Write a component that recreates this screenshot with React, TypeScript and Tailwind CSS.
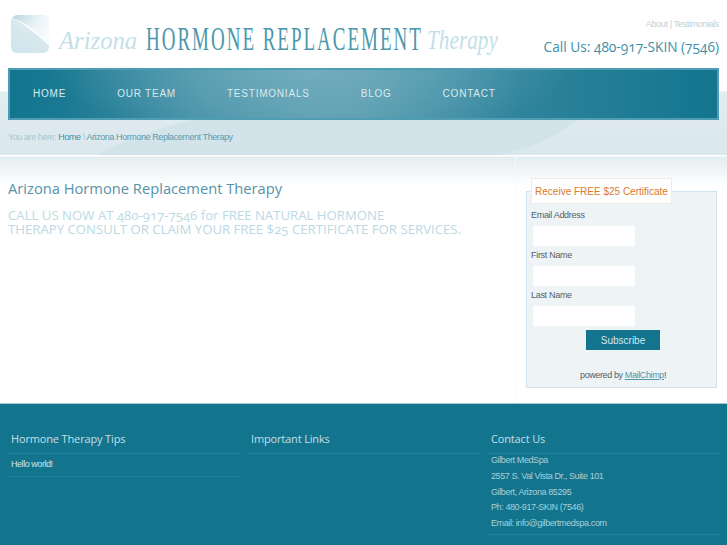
const NAV_ITEMS = ["HOME", "OUR TEAM", "TESTIMONIALS", "BLOG", "CONTACT"];
const FIELDS = ["Email Address", "First Name", "Last Name"];
const CONTACT_LINES = [
  "Gilbert MedSpa",
  "2557 S. Val Vista Dr., Suite 101",
  "Gilbert, Arizona 85295",
  "Ph: 480-917-SKIN (7546)",
  "Email: info@gilbertmedspa.com",
];

const ARIAL = "font-['Liberation_Sans',Arial,sans-serif]";
const HUMANIST = "font-['Open_Sans','Noto_Sans',sans-serif] [font-variant-numeric:oldstyle-nums]";

function LogoMark() {
  return (
    <svg width="38" height="38" viewBox="0 0 38 38" className="shrink-0">
      <defs>
        <linearGradient id="mark" x1="0.8" y1="0" x2="0.2" y2="1">
          <stop offset="0" stopColor="#eef6f8" />
          <stop offset="0.45" stopColor="#d8e9ee" />
          <stop offset="1" stopColor="#cfe4ec" />
        </linearGradient>
        <linearGradient id="markTop" x1="0" y1="0" x2="1" y2="0.5">
          <stop offset="0" stopColor="#b7d6e1" />
          <stop offset="0.6" stopColor="#e9f3f6" />
          <stop offset="1" stopColor="#f7fbfc" />
        </linearGradient>
      </defs>
      <rect width="38" height="38" rx="6" fill="url(#mark)" />
      <path d="M6 0 H32 A6 6 0 0 1 38 6 V29 C28 18 17 9 2 3 A6 6 0 0 1 6 0 Z" fill="url(#markTop)" />
      <path d="M2 3 C17 9 28 18 38 29 V31 C28 21 16 11 2 3 Z" fill="#ffffff" />
    </svg>
  );
}

function Header() {
  return (
    <header className="flex h-[68px] items-start justify-between pl-[11px] pr-[8px]">
      <div className="flex items-start pt-[15px]">
        <LogoMark />
        <div className="flex items-start">
          <span className="ml-[10px] mt-[11px] w-[81px] origin-left scale-x-[0.95] font-['Liberation_Serif',serif] text-[26px] leading-[30px] italic text-[#c3e0ea]">
            Arizona
          </span>
          <span className="ml-[6px] mt-[5px] w-[275px] origin-left scale-x-[0.56] whitespace-nowrap font-['Liberation_Serif',serif] text-[34px] leading-[38px] tracking-[3.5px] text-[#4c97ad]">
            HORMONE REPLACEMENT
          </span>
          <span className="ml-[6px] mt-[9px] origin-left scale-x-[0.76] font-['Liberation_Serif',serif] text-[28px] leading-[32px] italic text-[#c3e0ea]">
            Therapy
          </span>
        </div>
      </div>
      <div className="flex flex-col items-end pt-[18px]">
        <p className={`${ARIAL} text-[9px] leading-[12px] tracking-[-0.35px] text-[#bfcfd6]`}>About | Testimonials</p>
        <p className={`${HUMANIST} mt-[8px] text-[13.7px] leading-[18px] text-[#3f8ea6]`}>
          Call Us: 480-917-SKIN (7546)
        </p>
      </div>
    </header>
  );
}

function Nav() {
  return (
    <nav className="mx-[8px] flex h-[52px] items-center gap-[51px] border-2 border-[#4f9db2] bg-[radial-gradient(ellipse_260px_70px_at_300px_0px,rgba(120,178,194,0.7),rgba(120,178,194,0)),linear-gradient(90deg,#13758f_0%,#1b7a93_8%,#4a93a8_28%,#5c9fb2_42%,#5a9db0_50%,#2f849c_72%,#13758f_100%)] pl-[23px]">
      {NAV_ITEMS.map((item) => (
        <span
          key={item}
          className={`${ARIAL} text-[10px] leading-[12px] tracking-[0.78px] text-[#dbeaef]`}
        >
          {item}
        </span>
      ))}
    </nav>
  );
}

function Breadcrumb() {
  return (
    <p className={`${ARIAL} h-[35px] pl-[8px] pt-[11px] text-[9px] leading-[12px] tracking-[-0.42px] text-[#5d9bb0]`}>
      <span className="text-[#a4c7d3]">You are here: </span>
      <span className="text-[#3f8ea6]">Home</span>
      <span className="text-[#a4c7d3]"> \ </span>
      Arizona Hormone Replacement Therapy
    </p>
  );
}

function Article() {
  return (
    <main className="w-[516px] shrink-0 border-r border-[#f6f9fa] pl-[8px] pt-[23px]">
      <h1 className={`${HUMANIST} text-[14.7px] leading-[20px] text-[#5593a8]`}>
        Arizona Hormone Replacement Therapy
      </h1>
      <p className={`${HUMANIST} mt-[10px] text-[13.2px] leading-[14px] text-[#bcd9e3]`}>
        CALL US NOW AT 480-917-7546 for FREE NATURAL HORMONE
        <br />
        THERAPY CONSULT OR CLAIM YOUR FREE $25 CERTIFICATE FOR SERVICES.
      </p>
    </main>
  );
}

function SignupBox() {
  return (
    <aside className="ml-[10px] mt-[23px] flex h-[210px] w-[191px] flex-col">
      <div className="relative mt-[13px] flex h-[197px] flex-col border border-[#d2e1ec] bg-[#eef3f6] px-[4px] pt-[17px]">
        <div
          className={`${ARIAL} absolute left-[4px] top-[-14px] flex h-[26px] w-[141px] items-center justify-center border border-[#f0ebe4] bg-white text-[10px] text-[#d97a2b]`}
        >
          Receive FREE $25 Certificate
        </div>
        {FIELDS.map((label) => (
          <div key={label} className="flex h-[40px] flex-col">
            <label className={`${ARIAL} text-[9px] leading-[12px] tracking-[-0.3px] text-[#555f66]`}>{label}</label>
            <div className="ml-[2px] mt-[5px] h-[20px] w-[102px] bg-white" />
          </div>
        ))}
        <div
          className={`${ARIAL} ml-[55px] mt-[1px] flex h-[20px] w-[74px] items-center justify-center bg-[#13758d] text-[10px] text-[#d5e8ee]`}
        >
          Subscribe
        </div>
        <p className={`${ARIAL} mt-[19px] pl-[49px] text-[9px] leading-[12px] tracking-[-0.38px] text-[#555f66]`}>
          powered by <span className="text-[#4f96ab] underline">MailChimp</span>!
        </p>
      </div>
    </aside>
  );
}

function Footer() {
  return (
    <footer className="grid h-[142px] grid-cols-[232px_232px_232px] gap-x-[8px] border-t border-[#a9cbd6] bg-[#13758d] pl-[8px] pt-[27px]">
      <section>
        <FooterHeading>Hormone Therapy Tips</FooterHeading>
        <p className={`${ARIAL} border-b border-[#1a84a0] pb-[6px] pl-[3px] pt-[4px] text-[9px] leading-[12px] tracking-[-0.45px] text-[#cfe3e9]`}>
          Hello world!
        </p>
      </section>
      <section>
        <FooterHeading>Important Links</FooterHeading>
      </section>
      <section>
        <FooterHeading>Contact Us</FooterHeading>
        <div className="-mt-[1px] border-b border-[#1a84a0] pb-[2px] pl-[3px]">
          {CONTACT_LINES.map((line) => (
            <p key={line} className={`${ARIAL} text-[9px] leading-[15.75px] tracking-[-0.4px] text-[#a9cfda]`}>
              {line}
            </p>
          ))}
        </div>
      </section>
    </footer>
  );
}

function FooterHeading({ children }: { children: string }) {
  return (
    <h3 className={`${HUMANIST} h-[23px] border-b border-[#1a84a0] pl-[3px] text-[11px] leading-[15px] tracking-[-0.15px] text-[#c4dfe7]`}>
      {children}
    </h3>
  );
}

export default function App() {
  return (
    <div className="relative isolate h-[545px] w-[727px] overflow-hidden bg-[linear-gradient(180deg,#ffffff_0px,#ffffff_91px,#e2edf1_92px,#dae7ec_155px,#ffffff_155px,#ffffff_156px,#e3edf0_157px,#ffffff_186px)]">
      {/* darker swoosh behind the breadcrumb band */}
      <svg width="727" height="156" className="absolute left-0 top-0 -z-10">
        <path d="M97 155 C125 140 160 128 190 120 L578 120 C560 135 530 148 500 155 Z" fill="#d2e3e9" />
      </svg>
      <Header />
      <Nav />
      <Breadcrumb />
      <div className="flex h-[248px]">
        <Article />
        <SignupBox />
      </div>
      <Footer />
    </div>
  );
}
